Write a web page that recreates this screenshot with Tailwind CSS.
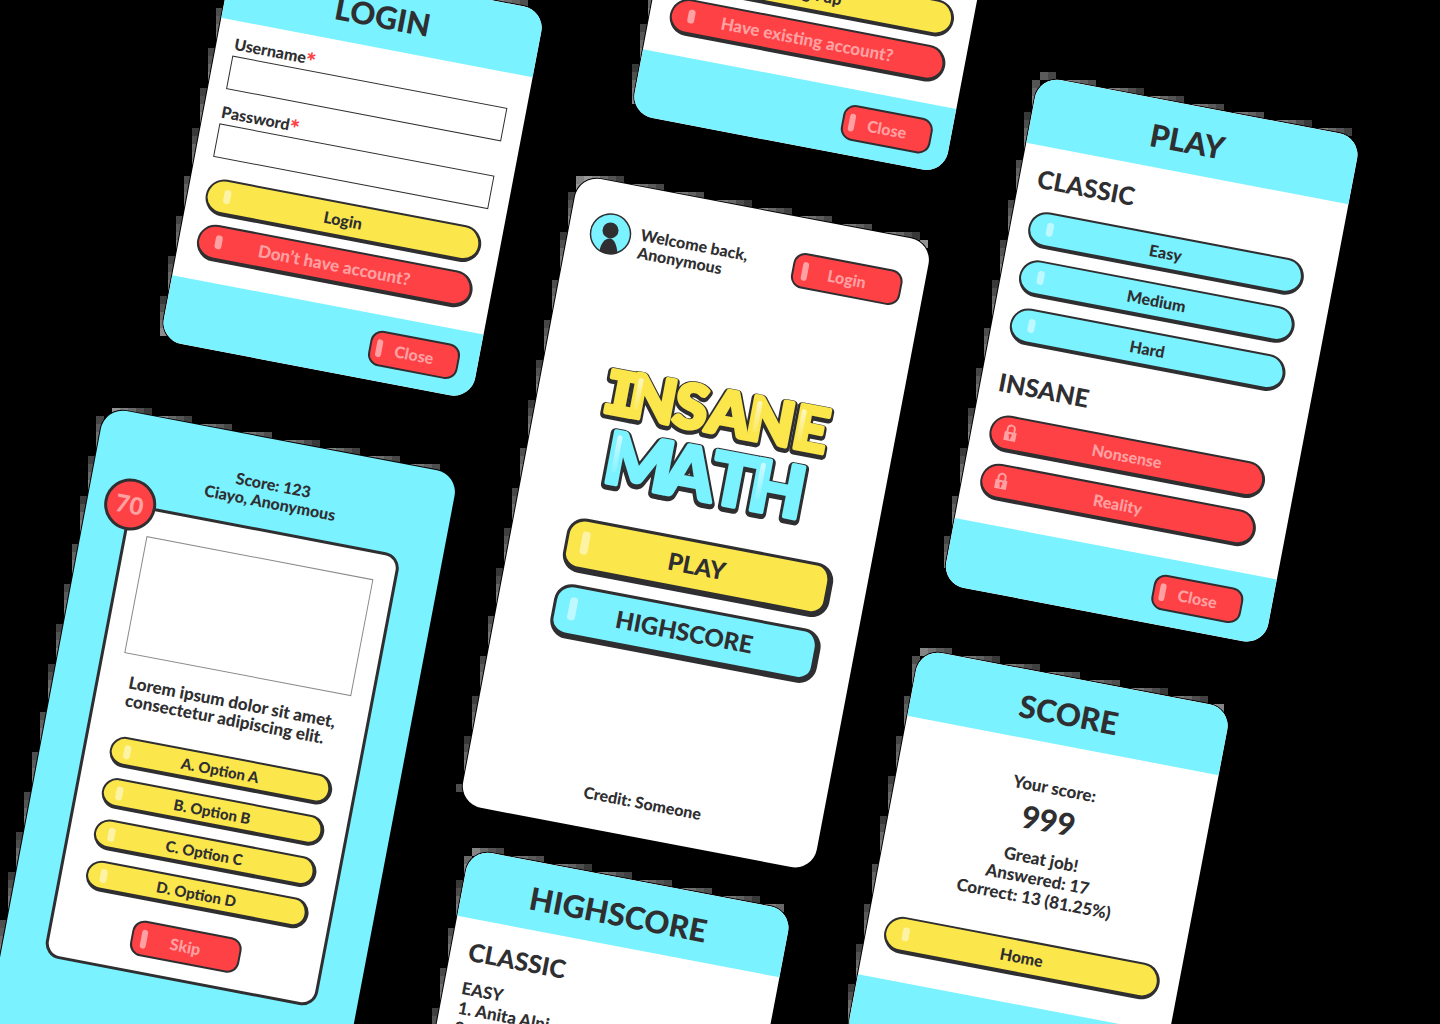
<!DOCTYPE html>
<html lang="en">
<head>
<meta charset="utf-8">
<meta name="viewport" content="width=device-width, initial-scale=1">
<title>Insane Math</title>
<script src="https://cdn.jsdelivr.net/npm/@tailwindcss/browser@4"></script>
</head>
<body class="bg-black">
<main class="relative h-screen w-full overflow-hidden bg-black font-['Lato',sans-serif] text-base leading-[18px] font-black text-[#2f2f31]">
  <svg id="edges" class="absolute inset-0 h-full w-full" aria-hidden="true"></svg>

  <!-- Login -->
  <section data-card class="absolute top-[-49px] left-[234px] flex w-[317px] origin-top-left rotate-[10.8deg] flex-col overflow-hidden rounded-[22px] bg-white ring-1 ring-black">
    <header class="flex h-[68px] items-center justify-center bg-[#7af2ff] pt-1"><h1 class="text-[31px] leading-9">LOGIN</h1></header>
    <form class="flex w-[298px] flex-col pt-[11px] pb-[21px] pl-[18px]">
      <label for="user" class="flex h-6 leading-6">Username<span class="pt-[3px] text-2xl leading-6 text-[#fe4145]">*</span></label>
      <input id="user" type="text" class="h-[34px] border border-[#2f2f31] bg-white px-2">
      <label for="pass" class="mt-[11px] flex h-6 leading-6">Password<span class="pt-[3px] text-2xl leading-6 text-[#fe4145]">*</span></label>
      <input id="pass" type="password" class="h-[34px] border border-[#2f2f31] bg-white px-2">
      <button type="button" class="relative mt-5 h-[37px] rounded-full border-2 border-r-[3px] border-b-4 border-[#2f2f31] bg-[#fbe64b]"><span class="absolute top-2 left-4 h-[14px] w-[7px] rounded-full bg-white/50"></span>Login</button>
      <button type="button" class="relative mt-[9px] h-[37px] rounded-full border-2 border-r-[3px] border-b-4 border-[#2f2f31] bg-[#fe4145] text-[17px] text-[#ffa0a2]"><span class="absolute top-2 left-4 h-[14px] w-[7px] rounded-full bg-[#ffa0a2]"></span>Don’t have account?</button>
    </form>
    <footer class="flex h-[66px] items-center bg-[#7af2ff] pl-[207px]">
      <button type="button" class="relative h-9 w-[91px] rounded-xl border-2 border-[#2f2f31] bg-[#fe4145] text-[#ffa0a2]"><span class="absolute top-[7px] left-[5px] h-[18px] w-[6px] rounded-full bg-[#ffa0a2]"></span>Close</button>
    </footer>
  </section>

  <!-- Sign up -->
  <section data-card class="absolute top-[-276px] left-[705px] flex h-[397px] w-[319px] origin-top-left rotate-[10.8deg] flex-col justify-end overflow-hidden rounded-[22px] bg-white ring-1 ring-black">
    <div class="flex w-[300px] flex-col gap-[9px] pb-[21px] pl-5">
      <button type="button" class="relative h-[37px] rounded-full border-2 border-r-[3px] border-b-4 border-[#2f2f31] bg-[#fbe64b]"><span class="absolute top-2 left-4 h-[14px] w-[7px] rounded-full bg-white/50"></span>Sign up</button>
      <button type="button" class="relative h-[37px] rounded-full border-2 border-r-[3px] border-b-4 border-[#2f2f31] bg-[#fe4145] text-[17px] text-[#ffa0a2]"><span class="absolute top-2 left-4 h-[14px] w-[7px] rounded-full bg-[#ffa0a2]"></span>Have existing account?</button>
    </div>
    <footer class="flex h-[66px] items-center bg-[#7af2ff] pl-[209px]">
      <button type="button" class="relative h-9 w-[91px] rounded-xl border-2 border-[#2f2f31] bg-[#fe4145] text-[#ffa0a2]"><span class="absolute top-[7px] left-[5px] h-[18px] w-[6px] rounded-full bg-[#ffa0a2]"></span>Close</button>
    </footer>
  </section>

  <!-- Home -->
  <section data-card class="absolute top-[175px] left-[579px] flex h-[640px] w-[360px] origin-top-left rotate-[10.8deg] flex-col overflow-hidden rounded-[22px] bg-white ring-1 ring-black">
    <header class="flex items-center pt-[30px] pl-[21px]">
      <svg class="size-[42px]" viewBox="0 0 42 42" aria-hidden="true">
        <circle cx="21" cy="21" r="20" fill="#7af2ff"/>
        <g transform="rotate(-10.8 21 21)"><circle cx="21" cy="17.500" r="8" fill="#2f2f31"/>
        <path d="M10 38c1-7 5-12.500 10-12.500S27 32 28 40c-6 2-13 1-18-2z" fill="#2f2f31"/></g>
        <circle cx="21" cy="21" r="20" fill="none" stroke="#2f2f31" stroke-width="1.500"/>
      </svg>
      <p class="w-[164px] pt-2 pl-[9px]">Welcome back,<br>Anonymous</p>
      <button type="button" class="relative h-9 w-[111px] rounded-xl border-2 border-[#2f2f31] bg-[#fe4145] text-[#ffa0a2]"><span class="absolute top-[7px] left-2 h-[19px] w-[6px] rounded-full bg-[#ffa0a2]"></span>Login</button>
    </header>
    <svg class="mt-[96px] ml-[55px] h-[150px] w-[250px]" viewBox="0 0 250 150" role="img" aria-label="Insane Math">
      <defs>
        <linearGradient id="shine" x1="0" x2="0" y1="0" y2="1"><stop offset="0" stop-color="#fff" stop-opacity=".65"/><stop offset="1" stop-color="#fff" stop-opacity=".1"/></linearGradient>
      </defs>
      <g font-family="Lato, sans-serif" font-weight="900" stroke-linejoin="round" paint-order="stroke">
        <g font-size="61" fill="#2f2f31" stroke="#2f2f31" stroke-width="9"><text x="10 36 82 116 156 203" y="60"><tspan font-family="DejaVu Sans Mono" font-weight="700" font-size="59">I</tspan>NSANE</text></g>
        <g font-size="61" fill="#fbe64b" stroke="#fbe64b" stroke-width="4"><text x="10 36 82 116 156 203" y="58"><tspan font-family="DejaVu Sans Mono" font-weight="700" font-size="59">I</tspan>NSANE</text></g>
        <g font-size="72" fill="#2f2f31" stroke="#2f2f31" stroke-width="10"><text x="24 84 132 171" y="129">MATH</text></g>
        <g font-size="72" fill="#7af2ff" stroke="#7af2ff" stroke-width="4"><text x="24 84 132 171" y="127">MATH</text></g>
      </g>
      <g fill="url(#shine)">
        <rect x="42" y="18" width="5" height="32" rx="2.500"/><rect x="163" y="18" width="5" height="32" rx="2.500"/><rect x="208" y="18" width="5" height="32" rx="2.500"/>
        <rect x="32" y="78" width="5" height="38" rx="2.500"/><rect x="178" y="78" width="5" height="38" rx="2.500"/>
      </g>
    </svg>
    <nav class="mt-4 ml-[55px] flex w-[271px] flex-col gap-3 text-2xl leading-8">
      <button type="button" class="relative h-[55px] rounded-[18px] border-[3px] border-r-[6px] border-b-[6px] border-[#2f2f31] bg-[#fbe64b]"><span class="absolute top-[10px] left-[13px] h-[23px] w-2 rounded-[3px] bg-white/50"></span>PLAY</button>
      <button type="button" class="relative h-[55px] rounded-[18px] border-[3px] border-r-[6px] border-b-[6px] border-[#2f2f31] bg-[#7af2ff]"><span class="absolute top-[10px] left-[13px] h-[23px] w-2 rounded-[3px] bg-white/50"></span>HIGHSCORE</button>
    </nav>
    <p class="mt-auto pb-[26px] text-center">Credit: Someone</p>
  </section>

  <!-- Play -->
  <section data-card class="absolute top-[76px] left-[1039px] flex w-[328px] origin-top-left rotate-[10.8deg] flex-col overflow-hidden rounded-[22px] bg-white ring-1 ring-black">
    <header class="flex h-[68px] items-center justify-center bg-[#7af2ff] pt-1 pr-3"><h1 class="text-[31px] leading-9">PLAY</h1></header>
    <div class="flex w-[298px] flex-col pt-4 pb-[25px] pl-[18px]">
      <h2 class="mb-4 h-8 text-[25px] leading-8">CLASSIC</h2>
      <div class="flex flex-col gap-3">
        <button type="button" class="relative h-[37px] rounded-full border-2 border-r-[3px] border-b-4 border-[#2f2f31] bg-[#7af2ff]"><span class="absolute top-2 left-4 h-[14px] w-[7px] rounded-full bg-white/50"></span>Easy</button>
        <button type="button" class="relative h-[37px] rounded-full border-2 border-r-[3px] border-b-4 border-[#2f2f31] bg-[#7af2ff]"><span class="absolute top-2 left-4 h-[14px] w-[7px] rounded-full bg-white/50"></span>Medium</button>
        <button type="button" class="relative h-[37px] rounded-full border-2 border-r-[3px] border-b-4 border-[#2f2f31] bg-[#7af2ff]"><span class="absolute top-2 left-4 h-[14px] w-[7px] rounded-full bg-white/50"></span>Hard</button>
      </div>
      <h2 class="mt-6 mb-4 h-8 text-[25px] leading-8">INSANE</h2>
      <div class="flex flex-col gap-3">
        <button type="button" class="relative h-[37px] rounded-full border-2 border-r-[3px] border-b-4 border-[#2f2f31] bg-[#fe4145] text-[#ffa0a2]">
          <svg class="absolute top-[6px] left-3 h-[18px] w-[14px]" viewBox="0 0 14 18" aria-hidden="true"><path d="M3.500 9V5a3.500 3.500 0 0 1 7 0v4" fill="none" stroke="#ffa0a2" stroke-width="2"/><path fill-rule="evenodd" d="M1 8h12v9H1zM7 10a1.600 1.600 0 0 0-.8 3V15.500h1.600V13A1.600 1.600 0 0 0 7 10z" fill="#ffa0a2"/></svg>Nonsense</button>
        <button type="button" class="relative h-[37px] rounded-full border-2 border-r-[3px] border-b-4 border-[#2f2f31] bg-[#fe4145] text-[#ffa0a2]">
          <svg class="absolute top-[6px] left-3 h-[18px] w-[14px]" viewBox="0 0 14 18" aria-hidden="true"><path d="M3.500 9V5a3.500 3.500 0 0 1 7 0v4" fill="none" stroke="#ffa0a2" stroke-width="2"/><path fill-rule="evenodd" d="M1 8h12v9H1zM7 10a1.600 1.600 0 0 0-.8 3V15.500h1.600V13A1.600 1.600 0 0 0 7 10z" fill="#ffa0a2"/></svg>Reality</button>
      </div>
    </div>
    <footer class="flex h-[67px] items-center bg-[#7af2ff] pl-[208px]">
      <button type="button" class="relative h-9 w-[91px] rounded-xl border-2 border-[#2f2f31] bg-[#fe4145] text-[#ffa0a2]"><span class="absolute top-[7px] left-[5px] h-[18px] w-[6px] rounded-full bg-[#ffa0a2]"></span>Close</button>
    </footer>
  </section>

  <!-- Question -->
  <section data-card class="absolute top-[407px] left-[105px] flex h-[640px] w-[360px] origin-top-left rotate-[10.8deg] flex-col items-center rounded-[22px] bg-[#7af2ff] ring-1 ring-black">
    <p class="pt-9 text-center">Score: 123<br>Ciayo, Anonymous</p>
    <div class="relative mt-[18px] flex h-[461px] w-[277px] flex-col items-center rounded-2xl border-[3px] border-[#2f2f31] bg-white pt-[26px]">
      <div class="absolute -top-7 -left-7 flex size-[52px] items-center justify-center rounded-full border-[3px] border-[#2f2f31] bg-[#fe4145] text-2xl text-[#ffa0a2]">70</div>
      <div class="h-[119px] w-[231px] border border-[#8a8a8c]"></div>
      <p class="mt-[19px] w-[210px] text-[17px] leading-[18px] whitespace-nowrap">Lorem ipsum dolor sit amet,<br>consectetur adipiscing elit.</p>
      <div class="mt-[27px] ml-1 flex w-[226px] flex-col gap-[11px] text-[15px] leading-4">
        <button type="button" class="relative h-[31px] rounded-full border-2 border-r-4 border-b-4 border-[#2f2f31] bg-[#fbe64b]"><span class="absolute top-[6px] left-3 h-[14px] w-[7px] rounded-full bg-white/50"></span>A. Option A</button>
        <button type="button" class="relative h-[31px] rounded-full border-2 border-r-4 border-b-4 border-[#2f2f31] bg-[#fbe64b]"><span class="absolute top-[6px] left-3 h-[14px] w-[7px] rounded-full bg-white/50"></span>B. Option B</button>
        <button type="button" class="relative h-[31px] rounded-full border-2 border-r-4 border-b-4 border-[#2f2f31] bg-[#fbe64b]"><span class="absolute top-[6px] left-3 h-[14px] w-[7px] rounded-full bg-white/50"></span>C. Option C</button>
        <button type="button" class="relative h-[31px] rounded-full border-2 border-r-4 border-b-4 border-[#2f2f31] bg-[#fbe64b]"><span class="absolute top-[6px] left-3 h-[14px] w-[7px] rounded-full bg-white/50"></span>D. Option D</button>
      </div>
      <button type="button" class="relative mt-5 h-9 w-[111px] rounded-xl border-2 border-[#2f2f31] bg-[#fe4145] text-[#ffa0a2]"><span class="absolute top-[7px] left-2 h-[19px] w-[6px] rounded-full bg-[#ffa0a2]"></span>Skip</button>
    </div>
  </section>

  <!-- Highscore -->
  <section data-card class="absolute top-[849px] left-[470px] flex h-[518px] w-[328px] origin-top-left rotate-[10.8deg] flex-col overflow-hidden rounded-[22px] bg-white ring-1 ring-black">
    <header class="flex h-[68px] items-center justify-center bg-[#7af2ff] pt-1 pr-3"><h1 class="text-[31px] leading-9">HIGHSCORE</h1></header>
    <div class="pt-4 pl-[18px]">
      <h2 class="h-8 text-[25px] leading-8">CLASSIC</h2>
      <h3 class="mt-3 text-[17px] leading-5">EASY</h3>
      <ol class="list-inside list-decimal text-[17px] leading-5"><li>Anita Alni</li><li>El</li></ol>
    </div>
  </section>

  <!-- Score -->
  <section data-card class="absolute top-[649px] left-[920px] flex w-[317px] origin-top-left rotate-[10.8deg] flex-col overflow-hidden rounded-[22px] bg-white ring-1 ring-black">
    <header class="flex h-[68px] items-center justify-center bg-[#7af2ff] pt-1"><h1 class="text-[31px] leading-9">SCORE</h1></header>
    <div class="pt-[34px] text-center text-[17px] leading-5">
      <p>Your score:</p>
      <p class="py-1 text-[31px] leading-9">999</p>
      <p class="pt-2">Great job!<br>Answered: 17<br>Correct: 13 (81.25%)</p>
    </div>
    <button type="button" class="relative mt-8 ml-[18px] h-[37px] w-[280px] rounded-full border-2 border-r-[3px] border-b-4 border-[#2f2f31] bg-[#fbe64b]"><span class="absolute top-2 left-4 h-[14px] w-[7px] rounded-full bg-white/50"></span>Home</button>
    <footer class="mt-7 h-[66px] bg-[#7af2ff]"></footer>
  </section>
</main>
<script>
  // Pixelated grey steps along the top and left edge of every card, on an 8px grid.
  const layer = document.getElementById('edges');
  const cards = document.querySelectorAll('[data-card]');
  const angle = 10.8 * Math.PI / 180, c = Math.cos(angle), s = Math.sin(angle), cell = 8;
  function drawEdges() {
    let out = '';
    for (const card of cards) {
      const x0 = card.offsetLeft, y0 = card.offsetTop, w = card.offsetWidth, h = card.offsetHeight;
      const left = Math.floor((x0 - h * s) / cell) * cell - cell, top = Math.floor(y0 / cell) * cell - cell;
      for (let y = top; y < y0 + h + w * s; y += cell) {
        for (let x = left; x < x0 + w; x += cell) {
          let n = 0, edge = false;
          for (let i = 1; i < 8; i += 2) for (let j = 1; j < 8; j += 2) {
            const dx = x + i - x0, dy = y + j - y0;
            const u = dx * c + dy * s, v = dy * c - dx * s;
            if (u > 0 && v > 0) n++;
            if (u > 4 && u < w - 10 && Math.abs(v) < 6 || v > 8 && v < h - 12 && Math.abs(u) < 6) edge = true;
          }
          if (edge && n > 0 && n < 16) {
            const g = Math.round(50 + 110 * n / 16);
            out += `<rect x="${x}" y="${y}" width="${cell}" height="${cell}" fill="rgb(${g},${g},${g})"/>`;
          }
        }
      }
    }
    layer.innerHTML = out;
  }
  const watcher = new ResizeObserver(drawEdges);
  cards.forEach(card => watcher.observe(card));
  window.addEventListener('load', drawEdges);
</script>
</body>
</html>
